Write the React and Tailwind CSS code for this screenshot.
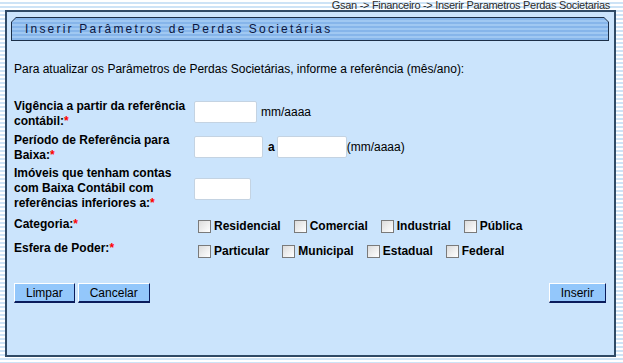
import React from 'react'

const Required = () => <span className="text-[#ff0000]">*</span>

const Checkbox = ({ label }) => (
  <label className="flex items-center gap-[3px]">
    <span className="w-[13px] h-[13px] border border-[#7a7a7a] bg-gradient-to-br from-[#dcdcdc] to-[#ffffff] shrink-0" />
    <span className="font-bold">{label}</span>
  </label>
)

const TextBox = ({ width }) => (
  <div className={`${width} h-[22px] bg-white border border-[#c4d3e2] rounded-[2px]`} />
)

const Button = ({ children }) => (
  <button className="h-[20px] px-[11px] bg-[#93c7fb] border-t border-l border-t-white border-l-white border-b-2 border-r border-b-[#0a1c5c] border-r-[#0a1c5c] text-[12px] leading-none text-black">
    {children}
  </button>
)

export default function App() {
  return (
    <div
      className="w-full h-[363px] overflow-hidden bg-[repeating-linear-gradient(to_bottom,#ffffff_0px,#ffffff_2px,#cde3f6_2px,#cde3f6_4px)] text-[12px] text-black"
      style={{ fontFamily: '"Liberation Sans", Arial, sans-serif' }}
    >
      {/* Breadcrumb */}
      <div className="h-[10px] leading-[10px] text-[11px] tracking-[-0.3px] text-[#2b2b2b] text-right pr-[13px] whitespace-nowrap">
        Gsan -&gt; Financeiro -&gt; Inserir Parametros Perdas Societarias
      </div>

      {/* Panel */}
      <div className="ml-[5px] w-[611px] h-[347px] border-2 border-[#2f4a66] bg-[#cbe4fc] flex flex-col">
        {/* Title bar */}
        <div className="mt-[5px] ml-[4px] w-[598px] h-[24px] bg-[#1c2f48] p-px [clip-path:polygon(5px_0,calc(100%-5px)_0,100%_5px,100%_100%,0_100%,0_5px)]">
          <div className="w-full h-full flex items-center pl-[13px] bg-[repeating-linear-gradient(to_bottom,#86b5ea_0px,#86b5ea_2px,#a0c8f2_2px,#a0c8f2_4px)] [clip-path:polygon(4px_0,calc(100%-4px)_0,100%_4px,100%_100%,0_100%,0_4px)]">
            <span className="text-[12px] tracking-[2.2px] text-[#0b1640]">
              Inserir Parâmetros de Perdas Societárias
            </span>
          </div>
        </div>

        <div className="px-[7px] leading-[15px]">
          <p className="mt-[21px]">
            Para atualizar os Parâmetros de Perdas Societárias, informe a referência (mês/ano):
          </p>

          {/* Vigência */}
          <div className="mt-[22px] flex items-start">
            <div className="w-[180px] font-bold">
              Vigência a partir da referência contábil:<Required />
            </div>
            <div className="mt-[2px] flex items-center gap-[4px]">
              <TextBox width="w-[63px]" />
              <span>mm/aaaa</span>
            </div>
          </div>

          {/* Período */}
          <div className="mt-[4px] flex items-start">
            <div className="w-[180px] font-bold">
              Período de Referência para Baixa:<Required />
            </div>
            <div className="mt-[3px] flex items-center">
              <TextBox width="w-[69px]" />
              <span className="font-bold ml-[5px] mr-[2px]">a</span>
              <TextBox width="w-[70px]" />
              <span>(mm/aaaa)</span>
            </div>
          </div>

          {/* Imóveis */}
          <div className="mt-[3px] flex items-start">
            <div className="w-[180px] font-bold">
              Imóveis que tenham contas com Baixa Contábil com referências inferiores a:<Required />
            </div>
            <div className="mt-[12px]">
              <TextBox width="w-[57px]" />
            </div>
          </div>

          {/* Categoria */}
          <div className="mt-[6px] flex items-start">
            <div className="w-[184px] font-bold">
              Categoria:<Required />
            </div>
            <div className="mt-[2px] flex items-center gap-[13px]">
              <Checkbox label="Residencial" />
              <Checkbox label="Comercial" />
              <Checkbox label="Industrial" />
              <Checkbox label="Pública" />
            </div>
          </div>

          {/* Esfera */}
          <div className="mt-[7px] flex items-start">
            <div className="w-[184px] font-bold">
              Esfera de Poder:<Required />
            </div>
            <div className="mt-[3px] flex items-center gap-[13px]">
              <Checkbox label="Particular" />
              <Checkbox label="Municipal" />
              <Checkbox label="Estadual" />
              <Checkbox label="Federal" />
            </div>
          </div>

          {/* Buttons */}
          <div className="mt-[24px] flex items-center justify-between">
            <div className="flex gap-[3px]">
              <Button>Limpar</Button>
              <Button>Cancelar</Button>
            </div>
            <div className="mr-[1px]">
              <Button>Inserir</Button>
            </div>
          </div>
        </div>
      </div>
    </div>
  )
}
